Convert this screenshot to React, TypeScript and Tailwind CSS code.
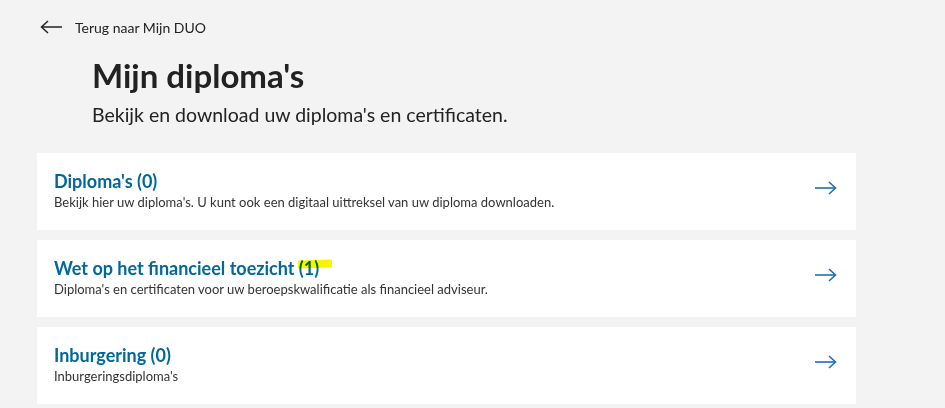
import React from "react";

const Arrow = () => (
  <svg width="22" height="14" viewBox="0 0 22 14" fill="none" stroke="#1c6fb5" strokeWidth="1.6" className="-mt-[7px]">
    <path d="M0 7h20" />
    <path d="M14 1l6.5 6-6.5 6" />
  </svg>
);

const Card = ({ title, count, desc, highlight }: { title: string; count: string; desc: string; highlight?: boolean }) => (
  <div className="bg-white h-[77px] flex items-center justify-between pl-[17px] pr-[19px]">
    <div className="flex flex-col -mt-[3px]">
      <div className="text-[18px] leading-[24px] font-bold text-[#01689b] relative">
        {title}{" "}
        <span className="relative">
          {count}
          {highlight && (
            <span className="absolute -left-[1px] top-[3px] w-[34px] h-[8px] bg-[#f5f500] mix-blend-multiply -rotate-2" />
          )}
        </span>
      </div>
      <div className="text-[13px] leading-[18px] text-[#333]">{desc}</div>
    </div>
    <Arrow />
  </div>
);

export default function App() {
  return (
    <div className="w-[945px] h-[408px] bg-[#f3f3f3] overflow-hidden" style={{ fontFamily: 'Lato, "Noto Sans", sans-serif' }}>
      <div className="flex items-center pt-[17px] pl-[40px] gap-[13px] h-[37px]">
        <svg width="22" height="14" viewBox="0 0 22 14" fill="none" stroke="#222" strokeWidth="1.5">
          <path d="M22 7H2" />
          <path d="M8 1L1.5 7 8 13" />
        </svg>
        <span className="text-[14px] text-[#222]">Terug naar Mijn DUO</span>
      </div>
      <div className="pl-[92px] pt-[18px]">
        <h1 className="text-[33px] leading-[40px] font-bold text-[#222]">Mijn diploma's</h1>
        <p className="text-[19.5px] leading-[28px] text-[#222] mt-[6px]">Bekijk en download uw diploma's en certificaten.</p>
      </div>
      <div className="ml-[37px] w-[819px] mt-[24px] flex flex-col gap-[10px]">
        <Card title="Diploma's" count="(0)" desc="Bekijk hier uw diploma's. U kunt ook een digitaal uittreksel van uw diploma downloaden." />
        <Card title="Wet op het financieel toezicht" count="(1)" desc="Diploma's en certificaten voor uw beroepskwalificatie als financieel adviseur." highlight />
        <Card title="Inburgering" count="(0)" desc="Inburgeringsdiploma's" />
      </div>
    </div>
  );
}
